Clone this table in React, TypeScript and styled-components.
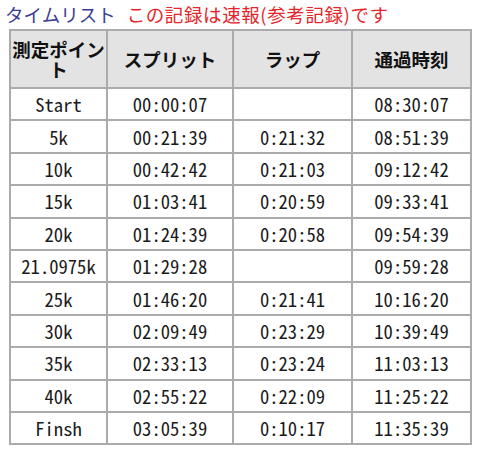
import React from "react";
import styled, { createGlobalStyle } from "styled-components";

const Global = createGlobalStyle`
  html, body { margin: 0; padding: 0; background: #fff; }
  body { font-family: "Noto Sans CJK JP", "Noto Sans", sans-serif; }
`;

const Page = styled.div`
  width: 480px;
  height: 452px;
  display: flex;
  flex-direction: column;
  overflow: hidden;
`;

const Title = styled.div`
  display: flex;
  align-items: center;
  gap: 11px;
  height: 30px;
  padding: 0 0 0 5px;
  font-size: 18.5px;
  line-height: 30px;
  margin-top: -1px;
`;

const TitleMain = styled.span`
  color: #3b3d94;
`;

const TitleNote = styled.span`
  color: #e3262b;
  letter-spacing: 0.6px;
`;

const Table = styled.table`
  margin-left: 9px;
  width: 463px;
  border-collapse: collapse;
  table-layout: fixed;
`;

const Th = styled.th`
  background: #e3e3e3;
  border: 2px solid #ababab;
  height: 56px;
  padding: 0;
  font-size: 18.5px;
  line-height: 20px;
  font-weight: 700;
  color: #111;
  text-align: center;
  vertical-align: middle;
`;

const Td = styled.td`
  border: 2px solid #ababab;
  height: 30.4px;
  padding: 0;
  font-family: "Noto Sans Mono CJK JP", "DejaVu Sans Mono", monospace;
  font-size: 18.6px;
  line-height: 20px;
  color: #1a1a1a;
  text-align: center;
  vertical-align: middle;
`;

const rows: [string, string, string, string][] = [
  ["Start", "00:00:07", "", "08:30:07"],
  ["5k", "00:21:39", "0:21:32", "08:51:39"],
  ["10k", "00:42:42", "0:21:03", "09:12:42"],
  ["15k", "01:03:41", "0:20:59", "09:33:41"],
  ["20k", "01:24:39", "0:20:58", "09:54:39"],
  ["21.0975k", "01:29:28", "", "09:59:28"],
  ["25k", "01:46:20", "0:21:41", "10:16:20"],
  ["30k", "02:09:49", "0:23:29", "10:39:49"],
  ["35k", "02:33:13", "0:23:24", "11:03:13"],
  ["40k", "02:55:22", "0:22:09", "11:25:22"],
  ["Finsh", "03:05:39", "0:10:17", "11:35:39"],
];

export default function App() {
  return (
    <>
      <Global />
      <Page>
        <Title>
          <TitleMain>タイムリスト</TitleMain>
          <TitleNote>この記録は速報(参考記録)です</TitleNote>
        </Title>
        <Table>
          <colgroup>
            <col style={{ width: 97 }} />
            <col style={{ width: 126 }} />
            <col style={{ width: 119 }} />
            <col style={{ width: 119 }} />
          </colgroup>
          <thead>
            <tr>
              <Th>測定ポイント</Th>
              <Th>スプリット</Th>
              <Th>ラップ</Th>
              <Th>通過時刻</Th>
            </tr>
          </thead>
          <tbody>
            {rows.map((r) => (
              <tr key={r[0]}>
                {r.map((c, i) => (
                  <Td key={i}>{c}</Td>
                ))}
              </tr>
            ))}
          </tbody>
        </Table>
      </Page>
    </>
  );
}
